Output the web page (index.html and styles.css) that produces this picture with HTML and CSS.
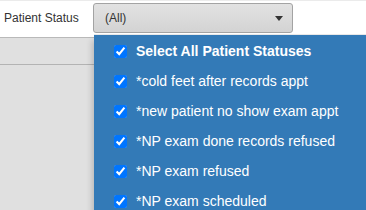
FILE: index.html
```html
<!DOCTYPE html>
<html lang="en">
<head>
    <meta charset="UTF-8">
    <title>Patient Status Filter</title>
    <link rel="stylesheet" href="styles.css">
</head>
<body>
    <div class="filter-bar">
        <span class="filter-label">Patient Status</span>
        <div class="multiselect">
            <button class="multiselect-btn" type="button">
                <span class="multiselect-text">(All)</span>
                <b class="caret"></b>
            </button>
            <ul class="multiselect-menu">
                <li class="select-all"><label><input type="checkbox" checked> Select All Patient Statuses</label></li>
                <li><label><input type="checkbox" checked> *cold feet after records appt</label></li>
                <li><label><input type="checkbox" checked> *new patient no show exam appt</label></li>
                <li><label><input type="checkbox" checked> *NP exam done records refused</label></li>
                <li><label><input type="checkbox" checked> *NP exam refused</label></li>
                <li><label><input type="checkbox" checked> *NP exam scheduled</label></li>
            </ul>
        </div>
    </div>
    <div class="content">
        <div class="grid-header"></div>
    </div>
</body>
</html>
```

FILE: styles.css
```css
html, body { margin: 0; height: 100%; overflow: hidden; }
body { font-family: "Liberation Sans", Arial, sans-serif; background: #e0e0e0; }

.filter-bar {
    display: flex;
    align-items: center;
    height: 36px;
    background: white;
    border-top: 1px solid #ebebeb;
    border-bottom: 1px solid #b9b9b9;
}
.filter-label {
    font-size: 12px;
    color: #333;
    padding-left: 4px;
    width: 89px;
    margin-top: -3px;
}
.multiselect { position: relative; align-self: flex-start; margin-top: 2px; }
.multiselect-btn {
    display: flex;
    align-items: center;
    justify-content: space-between;
    width: 200px;
    height: 30px;
    padding: 0 9px 0 11px;
    font-family: inherit;
    font-size: 12px;
    color: #333;
    background: linear-gradient(#e2e2e2, #d3d3d3);
    border: 1px solid #a3a3a3;
    border-radius: 3px;
}
.caret {
    width: 0;
    height: 0;
    border-top: 5px solid #333;
    border-left: 4px solid transparent;
    border-right: 4px solid transparent;
}
.multiselect-menu {
    position: absolute;
    top: 31px;
    left: 1px;
    width: 300px;
    margin: 0;
    padding: 1px 0 0;
    list-style: none;
    background: #337ab7;
    border-top: 1px solid #e8e8e8;
    box-shadow: -2px 6px 6px rgba(0, 0, 0, 0.18);
    z-index: 10;
}
.multiselect-menu li { height: 30px; }
.multiselect-menu label {
    display: flex;
    align-items: center;
    height: 30px;
    padding-left: 20px;
    font-size: 14px;
    color: white;
    white-space: nowrap;
}
.multiselect-menu input { margin: 0 5px 0 0; width: 13px; height: 13px; }
.multiselect-menu label { gap: 4px; }
.select-all label { font-weight: bold; }

.content { height: 100%; }
.grid-header { height: 26px; border-bottom: 1px solid #b3b3b3; }
```
